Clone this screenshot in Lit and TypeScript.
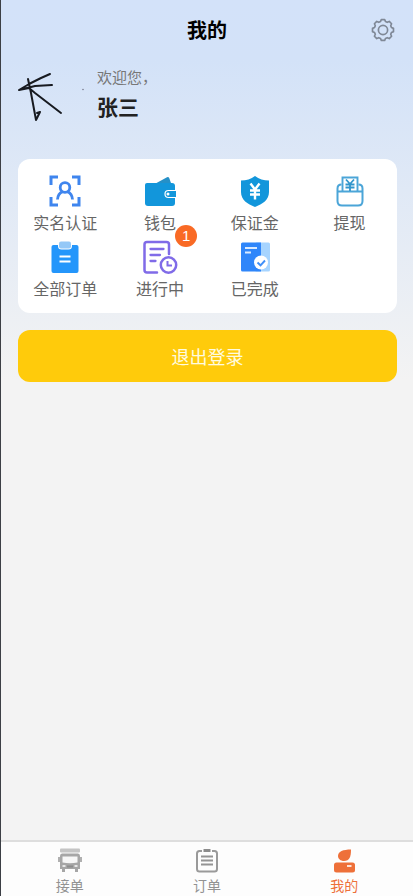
import { LitElement, html, css, svg, nothing, type TemplateResult } from "lit";
import { customElement, state } from "lit/decorators.js";
import { classMap } from "lit/directives/class-map.js";

interface Entry {
  label: string;
  icon: TemplateResult;
  badge?: number;
}

const icon = (body: unknown, size: number) => html`
  <svg viewBox="0 0 ${size} ${size}" width=${size} height=${size} fill="none" aria-hidden="true">${body}</svg>
`;

const gearPath = (() => {
  const points: string[] = [];
  const teeth = 8;
  for (let i = 0; i < teeth; i++) {
    const at = (r: number, offset: number) => {
      const a = ((i + offset) / teeth) * Math.PI * 2;
      return `${(12 + r * Math.sin(a)).toFixed(2)} ${(12 + r * Math.cos(a)).toFixed(2)}`;
    };
    points.push(at(10.6, -0.2), at(10.6, 0.2), at(8.8, 0.36), at(8.8, 0.64));
  }
  return `M${points.join("L")}Z`;
})();

const gear = icon(
  svg`<path d=${gearPath} stroke="#7f8896" stroke-width="1.7" stroke-linejoin="round"/>
    <circle cx="12" cy="12" r="4.6" stroke="#7f8896" stroke-width="1.7"/>`,
  24,
);

const entries: Entry[] = [
  {
    label: "实名认证",
    icon: icon(
      svg`<path d="M2 10V2H9M23 2H30V10M30 22V30H23M9 30H2V22" stroke="#3f85ee" stroke-width="3"/>
        <circle cx="16" cy="12.5" r="4.8" stroke="#3f85ee" stroke-width="2.8"/>
        <path d="M8.5 24.5C8.8 20 11 17.800 13.5 16.800M23.5 24.5C23.2 20 21 17.800 18.5 16.800" stroke="#3f85ee" stroke-width="2.8"/>`,
      32,
    ),
  },
  {
    label: "钱包",
    icon: icon(
      svg`<path d="M12.5 8 23 2.200Q24.5 1.600 25.2 3L27 8Z" fill="#2590c8"/>
        <path d="M3 8H28Q31 8 31 11V28Q31 31 28 31H4Q1 31 1 28V10Q1 8 3 8Z" fill="#1296db"/>
        <path d="M32 15.500H24.500a3.500 3.500 0 0 0 0 7H32" stroke="#fff" stroke-width="1.200" fill="#1296db"/>
        <circle cx="24" cy="19" r="1.500" fill="#fff"/>`,
      32,
    ),
  },
  {
    label: "保证金",
    icon: icon(
      svg`<path d="M16 1Q22 5.500 30 5.500V17C30 25 23.500 29 16 32 8.500 29 2 25 2 17V5.500Q10 5.500 16 1Z" fill="#1296db"/>
        <path d="M11.500 8.500 16 14.500 20.500 8.500M16 14.500V24.500M11 15.500H21M11 19.500H21" stroke="#fff" stroke-width="2.400"/>`,
      32,
    ),
  },
  {
    label: "提现",
    icon: icon(
      svg`<path d="M7.500 9.500Q3.500 9.500 3.500 13.500V26Q3.500 30.500 8 30.500H24Q28.500 30.500 28.500 26V13.500Q28.500 9.500 24.500 9.500" stroke="#4ba5d8" stroke-width="2"/>
        <path d="M8.500 16.500V2.500H23.500V16.500M3.500 16.500H28.500" stroke="#4ba5d8" stroke-width="1.900"/>
        <path d="M12 4.500 16 9 20 4.500M16 9V16M11.500 9.500H20.500M11.500 12.500H20.500" stroke="#3296cc" stroke-width="1.800"/>`,
      32,
    ),
  },
  {
    label: "全部订单",
    icon: icon(
      svg`<rect x="2.500" y="4" width="27" height="28" rx="2" fill="#2496fb"/>
        <path d="M9 3.500V5Q9 8.500 12.500 8.500H19.500Q23 8.500 23 5V3.500Z" fill="#fff"/>
        <rect x="10" y="0.500" width="12" height="7" rx="2" fill="#94c8f7"/>
        <path d="M10.500 15.500H21.500M10.500 20.500H21.500" stroke="#fff" stroke-width="2"/>`,
      32,
    ),
  },
  {
    label: "进行中",
    badge: 1,
    icon: icon(
      svg`<path d="M13 31.500H3Q0.500 31.500 0.500 29V3.500Q0.500 1 3 1H22.500Q25 1 25 3.500V13" stroke="#806be8" stroke-width="2.500" stroke-linecap="round"/>
        <path d="M6.500 8H19.500M6.500 14H16M6.500 20H11.500" stroke="#806be8" stroke-width="2.300" stroke-linecap="round"/>
        <circle cx="24.500" cy="24" r="7.700" stroke="#806be8" stroke-width="2.500"/>
        <path d="M23.500 20V24.500H28" stroke="#806be8" stroke-width="2"/>`,
      32,
    ),
  },
  {
    label: "已完成",
    icon: icon(
      svg`<rect x="16" y="1.500" width="15" height="29" rx="1.500" fill="#a6d4ff"/>
        <path d="M3.500 1.500H22V30.500H3.500Q2 30.500 2 29V3Q2 1.500 3.500 1.500Z" fill="#2f86fa"/>
        <path d="M6 7H18M6 11.500H12" stroke="#d9eaff" stroke-width="1.800"/>
        <circle cx="22" cy="21.500" r="7" fill="#fff"/>
        <path d="M18.500 21.500 21.500 24.300 26 19.500" stroke="#3f8ff8" stroke-width="1.900"/>`,
      32,
    ),
  },
];

const tabs: Entry[] = [
  {
    label: "接单",
    icon: icon(
      svg`<rect x="3" y="0.500" width="20" height="4" rx="1" fill="#c4c4c4"/>
        <path d="M5 5.500H21Q23 5.500 23 8V21H3V8Q3 5.500 5 5.500Z" fill="#a6a6a6"/>
        <path d="M5.500 8.500H20.500V14.500Q13 16 5.500 14.500Z" fill="#f6f6f6"/>
        <path d="M2 9V14M24 9V14" stroke="#b0b0b0" stroke-width="2"/>
        <path d="M5.500 18H8.500M17.500 18H20.500" stroke="#e6e6e6" stroke-width="2"/>
        <path d="M10 18.500H16" stroke="#8c8c8c" stroke-width="2"/>
        <path d="M6.500 20V24M19.500 20V24" stroke="#a6a6a6" stroke-width="3"/>`,
      26,
    ),
  },
  {
    label: "订单",
    icon: icon(
      svg`<rect x="3" y="3" width="20" height="20.500" rx="2.500" stroke="#9a9a9a" stroke-width="2"/>
        <path d="M8 2.500H18" stroke="#fdfdfd" stroke-width="4"/>
        <path d="M9.500 2.500H16.500" stroke="#8c8c8c" stroke-width="3"/>
        <path d="M7 8.500H19M7 12.500H19M7 16.500H19" stroke="#949494" stroke-width="1.900"/>`,
      26,
    ),
  },
  {
    label: "我的",
    icon: icon(
      svg`<path d="M20 1.500C20 9 18.500 13 13 13 9.500 13 7 10.800 7 8 7 3.500 12 1.500 20 1.500Z" fill="#ee7039"/>
        <rect x="3" y="14.500" width="21" height="10" rx="2.500" fill="#ee7039"/>
        <path d="M16 18H20.500" stroke="#fff" stroke-width="1.600"/>`,
      26,
    ),
  },
];

@customElement("app-root")
export class AppRoot extends LitElement {
  @state() private active = 2;

  static styles = css`
    :host {
      display: flex;
      flex-direction: column;
      box-sizing: border-box;
      min-height: 100vh;
      border-left: 1px solid #3c3f45;
      background: #f3f3f3 linear-gradient(#d3e2f9, #d3e2f8 60px, #f3f3f3 380px) no-repeat;
      color: #666;
      font-family: "Noto Sans CJK SC", sans-serif;
      font-size: 16px;
      line-height: 22px;
    }
    svg {
      display: block;
      flex: none;
      overflow: visible;
    }
    button {
      padding: 0;
      border: 0;
      background: none;
      color: inherit;
      font: inherit;
      cursor: pointer;
    }
    .header {
      display: grid;
      grid-template-columns: 1fr auto 1fr;
      align-items: center;
      height: 60px;
      padding: 0 18px;
    }
    .title {
      grid-column: 2;
      margin: 0;
      color: #000;
      font-size: 20px;
      line-height: 28px;
      font-weight: 700;
    }
    .settings {
      justify-self: end;
    }
    main {
      flex: 1;
      padding: 0 16px 0 17px;
    }
    .profile {
      display: flex;
      gap: 12px;
      margin-bottom: 31px;
      padding-top: 4px;
    }
    .text {
      padding-top: 2px;
    }
    .welcome {
      margin: 0;
      color: #777;
      font-size: 15px;
    }
    .name {
      margin: 4px 0 0;
      color: #222;
      font-size: 21px;
      line-height: 28px;
      font-weight: 700;
    }
    .menu {
      display: grid;
      grid-template-columns: repeat(4, 1fr);
      row-gap: 8px;
      padding: 16px 0 14px;
      border-radius: 12px;
      background: #fff;
    }
    .item {
      display: flex;
      flex-direction: column;
      align-items: center;
      gap: 4px;
    }
    .glyph {
      position: relative;
    }
    .badge {
      position: absolute;
      top: -16px;
      right: -21px;
      width: 22px;
      border-radius: 11px;
      background: #f96a25;
      color: #fff;
      font-family: "Liberation Sans", sans-serif;
      font-size: 15px;
      text-align: center;
    }
    .logout {
      display: block;
      width: 100%;
      margin-top: 17px;
      padding: 14px 0;
      border-radius: 12px;
      background: #ffcb0b;
      color: #fffbe0;
      font-size: 18px;
      line-height: 24px;
    }
    .tabs {
      display: grid;
      grid-template-columns: repeat(3, 1fr);
      padding: 6px 0 0;
      border-top: 2px solid #dedede;
      background: #fdfdfd;
    }
    .tab {
      display: flex;
      flex-direction: column;
      align-items: center;
      color: #929292;
      font-size: 14px;
      line-height: 22px;
    }
    .active {
      color: #ee7039;
    }
  `;

  render() {
    return html`
      <header class="header">
        <h1 class="title">我的</h1>
        <button class="settings" aria-label="设置">${gear}</button>
      </header>
      <main>
        <section class="profile">
          <svg viewBox="0 0 67 64" width="67" height="64" fill="none" role="img" aria-label="头像">
            <path
              d="M10 15 13 29 18 56 22 48 19 49M32 10 23 14 12 19.500 1 26 17 22 34 21M1 26 11 24 17 29 30 39 43 49"
              stroke="#171a20" stroke-width="2" stroke-linecap="round" stroke-linejoin="round" />
            <circle cx="65" cy="25.500" r="0.700" fill="#667" />
          </svg>
          <div class="text">
            <p class="welcome">欢迎您，</p>
            <h2 class="name">张三</h2>
          </div>
        </section>
        <section class="menu">
          ${entries.map(
            (e) => html`
              <button class="item">
                <span class="glyph">
                  ${e.icon}${e.badge ? html`<span class="badge">${e.badge}</span>` : nothing}
                </span>
                <span>${e.label}</span>
              </button>
            `,
          )}
        </section>
        <button class="logout">退出登录</button>
      </main>
      <nav class="tabs">
        ${tabs.map(
          (t, i) => html`
            <button
              class=${classMap({ tab: true, active: i === this.active })}
              aria-current=${i === this.active ? "page" : "false"}
              @click=${() => (this.active = i)}
            >
              ${t.icon}<span>${t.label}</span>
            </button>
          `,
        )}
      </nav>
    `;
  }
}
